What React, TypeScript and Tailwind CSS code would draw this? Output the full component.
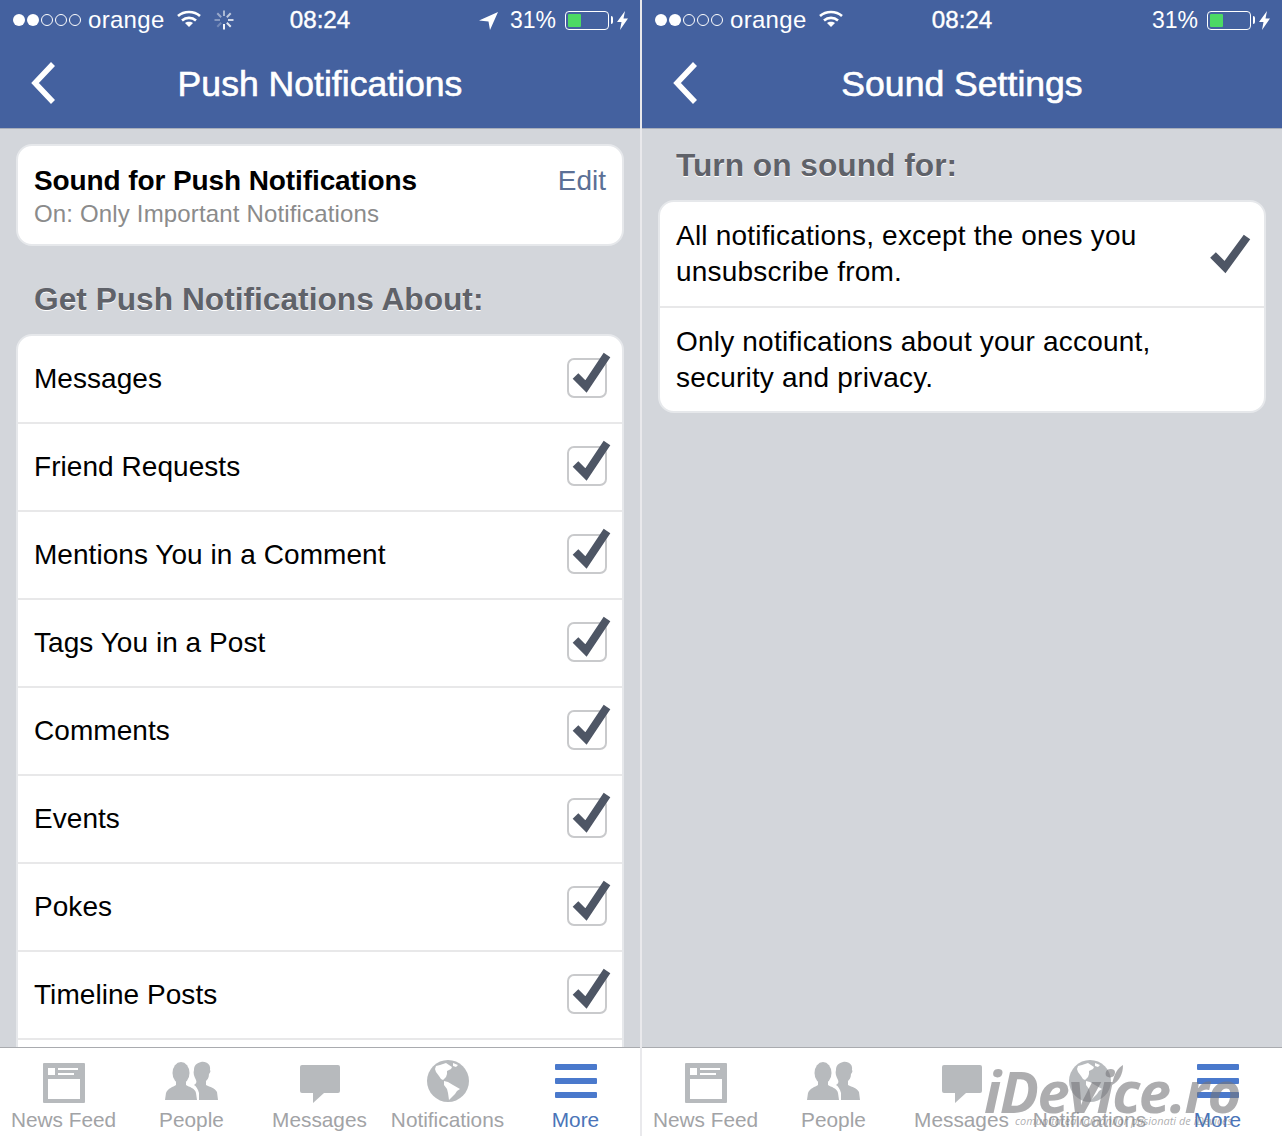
import type { ReactNode } from "react";

const items = ["Messages", "Friend Requests", "Mentions You in a Comment", "Tags You in a Post", "Comments", "Events", "Pokes", "Timeline Posts"];

function Wifi() {
  return (
    <svg width="24" height="17" viewBox="0 0 24 17" fill="none" stroke="white" strokeWidth="2.6">
      <path d="M1 6C7 0.6 17 0.6 23 6" />
      <path d="M5 10.5C9 7 15 7 19 10.5" />
      <path d="M12 17L8 13C10 11.4 14 11.4 16 13Z" fill="white" stroke="none" />
    </svg>
  );
}

function Spinner() {
  const lines = [0, 45, 90, 135, 180, 225, 270, 315];
  return (
    <svg width="20" height="20" viewBox="0 0 20 20" stroke="white" strokeWidth="2">
      {lines.map((a, i) => (
        <line key={a} x1="10" y1="0.5" x2="10" y2="6" transform={`rotate(${a} 10 10)`} opacity={0.25 + ((i + 3) % 8) * 0.1} />
      ))}
    </svg>
  );
}

function StatusBar({ location, spinner }: { location?: boolean; spinner?: boolean }) {
  return (
    <div className="grid h-10 grid-cols-[1fr_auto_1fr] items-center text-white">
      <div className="flex items-center pl-[13px]">
        <div className="flex gap-[2px]">
          <span className="h-[12px] w-[12px] rounded-full bg-white" />
          <span className="h-[12px] w-[12px] rounded-full bg-white" />
          <span className="h-[12px] w-[12px] rounded-full border border-white" />
          <span className="h-[12px] w-[12px] rounded-full border border-white" />
          <span className="h-[12px] w-[12px] rounded-full border border-white" />
        </div>
        <span className="ml-[7px] text-[24px] leading-none tracking-[0.3px]">orange</span>
        <span className="ml-[12px] -mt-[3px]"><Wifi /></span>
        {spinner && <span className="ml-[13px]"><Spinner /></span>}
      </div>
      <div className="text-[24.2px] [-webkit-text-stroke:0.4px_white]">08:24</div>
      <div className="flex items-center justify-end pr-[12px]">
        {location && (
          <svg width="19" height="18" viewBox="0 0 19 18" fill="white" className="mr-[12px] mt-[2px]">
            <path d="M19 0L0 8.5L9.5 9.5L11 18Z" />
          </svg>
        )}
        <span className="text-[23px] leading-none">31%</span>
        <div className="ml-[9px] flex h-[19px] w-[44px] rounded-[4px] border border-white p-[2px]">
          <div className="h-full w-[13px] rounded-[1px] bg-[#4cd964]" />
        </div>
        <div className="ml-[2px] h-[8px] w-[2px] rounded-r-sm bg-white" />
        <svg width="11" height="19" viewBox="0 0 11 19" fill="white" className="ml-[4px]">
          <path d="M8 0L0 11H4.5L3 19L11 7.5H6.5Z" />
        </svg>
      </div>
    </div>
  );
}

function NavBar({ title }: { title: string }) {
  return (
    <div className="grid h-[89px] grid-cols-[1fr_auto_1fr] items-center border-b border-[#a8aebb] bg-[#44619f] text-white">
      <svg width="30" height="44" viewBox="0 0 30 44" fill="none" stroke="white" strokeWidth="5.5" className="ml-[29px] -mt-[2px]">
        <path d="M24 3L6 22L24 41" />
      </svg>
      <div className="pt-[2px] text-[35.6px] font-[500] [-webkit-text-stroke:0.6px_white]">{title}</div>
      <div />
    </div>
  );
}

function Card({ children, className }: { children: ReactNode; className?: string }) {
  return <div className={`mx-4 rounded-[16px] border-2 border-[#e6e8eb] bg-white ${className ?? ""}`}>{children}</div>;
}

function Heading({ children, className }: { children: ReactNode; className?: string }) {
  return (
    <div className={`pl-[34px] text-[31.7px] font-bold leading-[32px] text-[#5f6269] [text-shadow:0_1px_0_#fff] ${className ?? ""}`}>
      {children}
    </div>
  );
}

function CheckBox() {
  return (
    <svg width="46" height="48" viewBox="0 0 46 48" fill="none">
      <rect x="2" y="8" width="38" height="38" rx="6" stroke="#c9cacc" strokeWidth="2" />
      <path d="M9.5 25L20 35.5L41 4" stroke="#4e5665" strokeWidth="8" />
    </svg>
  );
}

function NewsIcon() {
  return (
    <svg width="42" height="44" viewBox="0 0 42 44">
      <path fillRule="evenodd" fill="#b7babd" d="M1 3H41A1 1 0 0 1 42 4V42A1 1 0 0 1 41 43H1A1 1 0 0 1 0 42V4A1 1 0 0 1 1 3ZM5 19V39H37V19ZM5 8V15H12V8ZM15 8V10H35V8ZM15 13V15H31V13Z" />
    </svg>
  );
}

function PeopleIcon() {
  return (
    <svg width="54" height="44" viewBox="0 0 54 44" fill="#b7babd">
      <ellipse cx="16" cy="13" rx="8.5" ry="11" />
      <path d="M11 20H21V25C24 27 30 28 31 33L32 40H0L1 33C3 28 8 27 11 25Z" />
      <path d="M36 2C42 1 46 5 45 10C46 11 45 13 44 14C44 18 42 20 41 21V25C45 27 50 28 52 32L53 40H34V33C33 29 31 26 29 25C31 24 32 22 31 20C29 16 28 13 29 10C29 5 32 3 36 2Z" />
    </svg>
  );
}

function BubbleIcon() {
  return (
    <svg width="40" height="44" viewBox="0 0 40 44" fill="#b7babd">
      <path d="M2 5H38A2 2 0 0 1 40 7V31A2 2 0 0 1 38 33H24L13 43V33H2A2 2 0 0 1 0 31V7A2 2 0 0 1 2 5Z" />
    </svg>
  );
}

function GlobeIcon() {
  return (
    <svg width="42" height="44" viewBox="0 0 42 44">
      <circle cx="21" cy="21" r="21" fill="#b7babd" />
      <path fill="white" d="M9 6L13 5L19 3L25 7L24 9L20 11L20 14L19 17L16 20L14 19L12 16L9 12L8 9Z" />
      <path fill="white" d="M17 21L21 22L26 25L33 29L30 31L28 34L24 38L22 40L21 33L20 29L17 25Z" />
      <path fill="white" d="M26 3L31 5L29 7L26 6Z" />
    </svg>
  );
}

function MoreIcon() {
  return (
    <div className="mt-[4px] flex flex-col gap-[8px]">
      <div className="h-[6px] w-[42px] rounded-[1px] bg-[#4a79cc]" />
      <div className="h-[6px] w-[42px] rounded-[1px] bg-[#4a79cc]" />
      <div className="h-[6px] w-[42px] rounded-[1px] bg-[#4a79cc]" />
    </div>
  );
}

function TabBar() {
  const tabs = [
    { label: "News Feed", icon: <NewsIcon /> },
    { label: "People", icon: <PeopleIcon /> },
    { label: "Messages", icon: <BubbleIcon /> },
    { label: "Notifications", icon: <GlobeIcon /> },
    { label: "More", icon: <MoreIcon />, active: true },
  ];
  return (
    <div className="grid h-[89px] shrink-0 grid-cols-5 border-t border-[#a9abaf] bg-white">
      {tabs.map((t) => (
        <div key={t.label} className="flex flex-col items-center">
          <div className="flex h-[60px] items-start pt-[12px]">{t.icon}</div>
          <div className={`whitespace-nowrap pr-[1px] text-[20.8px] leading-[24px] ${t.active ? "text-[#4a74b8]" : "text-[#a2a3a6]"}`}>{t.label}</div>
        </div>
      ))}
    </div>
  );
}

export default function App() {
  return (
    <div className="flex h-[1136px] w-[1282px] gap-[2px] overflow-hidden bg-[#e9e9ec] font-['Liberation_Sans',sans-serif]">
      <div className="flex w-[640px] flex-col">
        <div className="bg-[#44619f]"><StatusBar location spinner /></div>
        <NavBar title="Push Notifications" />
        <div className="min-h-0 flex-1 overflow-hidden bg-[#d3d6db] pt-[15px]">
          <Card className="flex h-[102px] justify-between pl-4 pr-4 pt-[19px]">
            <div>
              <div className="text-[28px] font-bold leading-[32px] tracking-[-0.1px] text-black">Sound for Push Notifications</div>
              <div className="mt-[1px] text-[24px] leading-[32px] tracking-[0.16px] text-[#8b8b8b]">On: Only Important Notifications</div>
            </div>
            <div className="text-[28px] leading-[32px] text-[#5b7096]">Edit</div>
          </Card>
          <Heading className="mt-[37px]">Get Push Notifications About:</Heading>
          <Card className="mt-[19px]">
            {items.map((item) => (
              <div key={item} className="flex h-[88px] items-center justify-between border-b-2 border-[#e8e8e9] pl-4 pr-[10px]">
                <span className="text-[28px] leading-none tracking-[0.05px] text-black">{item}</span>
                <span className="-mt-[8px]"><CheckBox /></span>
              </div>
            ))}
            <div className="h-10" />
          </Card>
        </div>
        <TabBar />
      </div>
      <div className="relative flex w-[640px] flex-col">
        <div className="bg-[#44619f]"><StatusBar /></div>
        <NavBar title="Sound Settings" />
        <div className="min-h-0 flex-1 bg-[#d3d6db] pt-[20px]">
          <Heading>Turn on sound for:</Heading>
          <Card className="mt-[19px]">
            <div className="flex h-[106px] items-center justify-between border-b-2 border-[#e8e8e9] pl-4 pr-[12px]">
              <span className="text-[28px] leading-[36px] tracking-[0.2px] text-black">All notifications, except the ones you<br />unsubscribe from.</span>
              <svg width="42" height="42" viewBox="0 0 42 42" fill="none" stroke="#4e5665" strokeWidth="8">
                <path d="M3 22L15 34L37 4" />
              </svg>
            </div>
            <div className="flex h-[103px] items-center pl-4">
              <span className="text-[28px] leading-[36px] tracking-[0.2px] text-black">Only notifications about your account,<br />security and privacy.</span>
            </div>
          </Card>
        </div>
        <TabBar />
        {/* iDevice.ro watermark */}
        <div className="pointer-events-none absolute left-[342px] top-[1057px] whitespace-nowrap text-[#77777a]/60">
          <svg width="12" height="20" viewBox="0 0 12 20" fill="currentColor" className="absolute left-[128px] top-[8px]">
            <path d="M0 20C2 8 6 3 11 0C11 8 8 16 0 20Z" />
          </svg>
          <div className="font-['Open_Sans',sans-serif] text-[58px] font-bold italic leading-[68px] tracking-[-1.5px]">iDevice.ro</div>
          <div className="ml-[31px] -mt-[10px] font-['Open_Sans',sans-serif] text-[11px] italic leading-[12px]">comunitatea românilor pasionati de iDevices</div>
        </div>
      </div>
    </div>
  );
}
